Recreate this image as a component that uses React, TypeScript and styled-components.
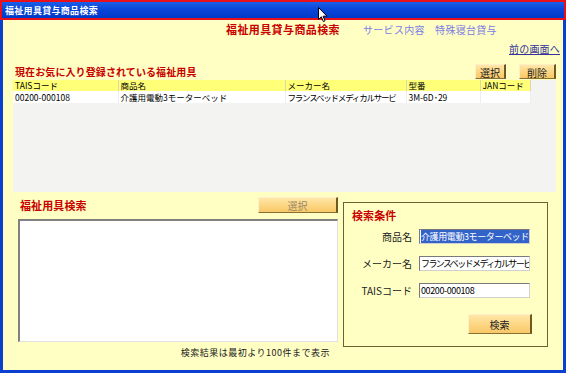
import React from "react";
import styled, { createGlobalStyle } from "styled-components";

const GlobalStyle = createGlobalStyle`
  html, body {
    margin: 0;
    padding: 0;
    overflow: hidden;
    background: #ffffff;
  }
  * {
    box-sizing: border-box;
  }
`;

const FONT = `"Noto Sans CJK JP", "Liberation Sans", sans-serif`;

const Window = styled.div`
  position: relative;
  width: 566px;
  height: 373px;
  display: flex;
  flex-direction: column;
  font-family: ${FONT};
  color: #000;
`;

const TitleBar = styled.div`
  height: 20px;
  border: 2px solid #e8101a;
  background: linear-gradient(180deg, #1a5fe8 0%, #0a46d8 45%, #0039c8 100%);
  display: flex;
  align-items: center;
  padding-left: 3px;
  color: #fff;
  font-size: 9px;
  font-weight: bold;
  letter-spacing: 0.3px;
`;

const Frame = styled.div`
  flex: 1;
  border: 3px solid #0a3fd0;
  border-top: none;
  background: #ffffc4;
  display: flex;
  flex-direction: column;
`;

const HeadingRow = styled.div`
  display: flex;
  align-items: center;
  height: 14px;
  margin-top: 2px;
  padding-left: 223px;
  gap: 23px;
`;

const PageTitle = styled.span`
  color: #c80000;
  font-size: 11px;
  font-weight: bold;
  letter-spacing: 0.4px;
`;

const SubTitle = styled.span`
  color: #7c7ce4;
  font-size: 10px;
  letter-spacing: 0.3px;
`;

const LinkRow = styled.div`
  display: flex;
  justify-content: flex-end;
  margin-top: 7px;
  height: 12px;
  padding-right: 3px;
`;

const BackLink = styled.a`
  color: #333399;
  font-size: 10px;
  text-decoration: underline;
  line-height: 12px;
  letter-spacing: 0.2px;
`;

const SectionRow = styled.div<{ $pl: number }>`
  display: flex;
  align-items: center;
  justify-content: space-between;
  padding-left: ${({ $pl }) => $pl}px;
`;

const SectionTitle = styled.span<{ $size: number }>`
  color: #c80000;
  font-size: ${({ $size }) => $size}px;
  font-weight: bold;
  letter-spacing: 0.1px;
`;

const ButtonGroup = styled.div`
  display: flex;
  gap: 13px;
  padding-right: 7px;
`;

const Button = styled.button<{ $w: number; $h: number; $disabled?: boolean }>`
  width: ${({ $w }) => $w}px;
  height: ${({ $h }) => $h}px;
  padding: 0;
  font-family: ${FONT};
  font-size: 10px;
  color: ${({ $disabled }) => ($disabled ? "#9a8a6a" : "#222")};
  background: linear-gradient(180deg, #ffe7a8 0%, #fcd47e 60%, #f8c868 100%);
  border: none;
  border-right: 2px solid #6e5a20;
  border-bottom: 1px solid #8a7030;
  border-top: 1px solid #fff0c8;
  border-left: 1px solid #fff0c8;
`;

const GridArea = styled.div`
  margin: 0 7px 0 10px;
  height: 112px;
  background: #f3f3f2;
`;

const Table = styled.table`
  border-collapse: collapse;
  table-layout: fixed;
  font-size: 8.5px;
  font-family: ${FONT};
`;

const HeadCell = styled.th<{ $w: number }>`
  width: ${({ $w }) => $w}px;
  height: 11px;
  padding: 0 0 0 2px;
  background: #ffff78;
  border-right: 1px solid #d8d8b0;
  font-weight: normal;
  text-align: left;
  white-space: nowrap;
  overflow: hidden;
  line-height: 11px;
`;

const Cell = styled.td<{ $narrow?: boolean }>`
  height: 12px;
  padding: 0 0 0 2px;
  background: #fff;
  border-right: 1px solid #eeeeee;
  white-space: nowrap;
  overflow: hidden;
  line-height: 12px;
  letter-spacing: ${({ $narrow }) => ($narrow ? "-1.2px" : "0")};
`;

const LowerArea = styled.div`
  display: flex;
  padding-left: 15px;
  gap: 5px;
  flex: 1;
`;

const LeftColumn = styled.div`
  width: 320px;
  display: flex;
  flex-direction: column;
  padding-top: 5px;
`;

const ResultBox = styled.div`
  margin-top: 6px;
  height: 123px;
  background: #fff;
  border-top: 2px solid #808080;
  border-left: 2px solid #808080;
  border-right: 1px solid #e0e0e0;
  border-bottom: 1px solid #e0e0e0;
`;

const Caption = styled.div`
  text-align: right;
  padding-right: 8px;
  margin-top: 4px;
  font-size: 9px;
  letter-spacing: 0.5px;
  color: #222;
`;

const CriteriaPanel = styled.div`
  margin-top: 10px;
  width: 205px;
  height: 145px;
  border: 1px solid #6e6030;
  display: flex;
  flex-direction: column;
  padding: 4px 0 0 8px;
`;

const FieldList = styled.div`
  display: flex;
  flex-direction: column;
  gap: 12px;
  margin-top: 6px;
`;

const FieldRow = styled.div`
  display: flex;
  align-items: center;
  gap: 7px;
`;

const FieldLabel = styled.span`
  width: 60px;
  text-align: right;
  font-size: 10px;
  color: #222;
`;

const FieldBox = styled.div<{ $narrow?: boolean }>`
  width: 111px;
  height: 15px;
  background: #fff;
  border-top: 1px solid #7a7a7a;
  border-left: 1px solid #7a7a7a;
  border-right: 1px solid #d0d0d0;
  border-bottom: 1px solid #d0d0d0;
  font-size: 9px;
  line-height: 13px;
  padding-left: 1px;
  white-space: nowrap;
  overflow: hidden;
  letter-spacing: ${({ $narrow }) => ($narrow ? "-1.6px" : "-0.4px")};
`;

const Selected = styled.span`
  background: #3163c8;
  color: #fff;
  display: inline-block;
  height: 13px;
`;

const SearchRow = styled.div`
  display: flex;
  justify-content: flex-end;
  padding-right: 15px;
  margin-top: 16px;
`;

const Cursor = styled.svg`
  position: absolute;
  left: 318px;
  top: 7px;
`;

const columns = [
  { key: "tais", label: "TAISコード", w: 105 },
  { key: "name", label: "商品名", w: 167 },
  { key: "maker", label: "メーカー名", w: 121 },
  { key: "model", label: "型番", w: 74 },
  { key: "jan", label: "JANコード", w: 50 },
];

const favorites = [
  {
    tais: "00200-000108",
    name: "介護用電動3モーターベッド",
    maker: "フランスベッドメディカルサービ",
    model: "3M-6D･29",
    jan: "",
  },
];

export default function App() {
  return (
    <Window>
      <GlobalStyle />
      <TitleBar>福祉用具貸与商品検索</TitleBar>
      <Frame>
        <HeadingRow>
          <PageTitle>福祉用具貸与商品検索</PageTitle>
          <SubTitle>サービス内容　特殊寝台貸与</SubTitle>
        </HeadingRow>
        <LinkRow>
          <BackLink>前の画面へ</BackLink>
        </LinkRow>
        <SectionRow $pl={12} style={{ marginTop: 8, height: 17 }}>
          <SectionTitle $size={10}>現在お気に入り登録されている福祉用具</SectionTitle>
          <ButtonGroup>
            <Button $w={31} $h={15}>選択</Button>
            <Button $w={37} $h={15}>削除</Button>
          </ButtonGroup>
        </SectionRow>
        <GridArea>
          <Table>
            <thead>
              <tr>
                {columns.map((c) => (
                  <HeadCell key={c.key} $w={c.w}>
                    {c.label}
                  </HeadCell>
                ))}
              </tr>
            </thead>
            <tbody>
              {favorites.map((row) => (
                <tr key={row.tais}>
                  {columns.map((c) => (
                    <Cell key={c.key} $narrow={c.key === "maker"}>
                      {row[c.key as keyof typeof row]}
                    </Cell>
                  ))}
                </tr>
              ))}
            </tbody>
          </Table>
        </GridArea>
        <LowerArea>
          <LeftColumn>
            <SectionRow $pl={2}>
              <SectionTitle $size={11}>福祉用具検索</SectionTitle>
              <Button $w={80} $h={16} $disabled>
                選択
              </Button>
            </SectionRow>
            <ResultBox />
            <Caption>検索結果は最初より100件まで表示</Caption>
          </LeftColumn>
          <CriteriaPanel>
            <SectionTitle $size={11}>検索条件</SectionTitle>
            <FieldList>
              <FieldRow>
                <FieldLabel>商品名</FieldLabel>
                <FieldBox>
                  <Selected>介護用電動3モーターベッド</Selected>
                </FieldBox>
              </FieldRow>
              <FieldRow>
                <FieldLabel>メーカー名</FieldLabel>
                <FieldBox $narrow>フランスベッドメディカルサービ</FieldBox>
              </FieldRow>
              <FieldRow>
                <FieldLabel>TAISコード</FieldLabel>
                <FieldBox>00200-000108</FieldBox>
              </FieldRow>
            </FieldList>
            <SearchRow>
              <Button $w={64} $h={20}>検索</Button>
            </SearchRow>
          </CriteriaPanel>
        </LowerArea>
      </Frame>
      <Cursor width="10" height="16" viewBox="0 0 10 16">
        <path
          d="M0.5 0.5 L0.5 12.5 L3.3 9.8 L5.3 14.5 L7 13.8 L5.1 9.2 L9 9.2 Z"
          fill="#fff"
          stroke="#000"
          strokeWidth="1"
        />
      </Cursor>
    </Window>
  );
}
